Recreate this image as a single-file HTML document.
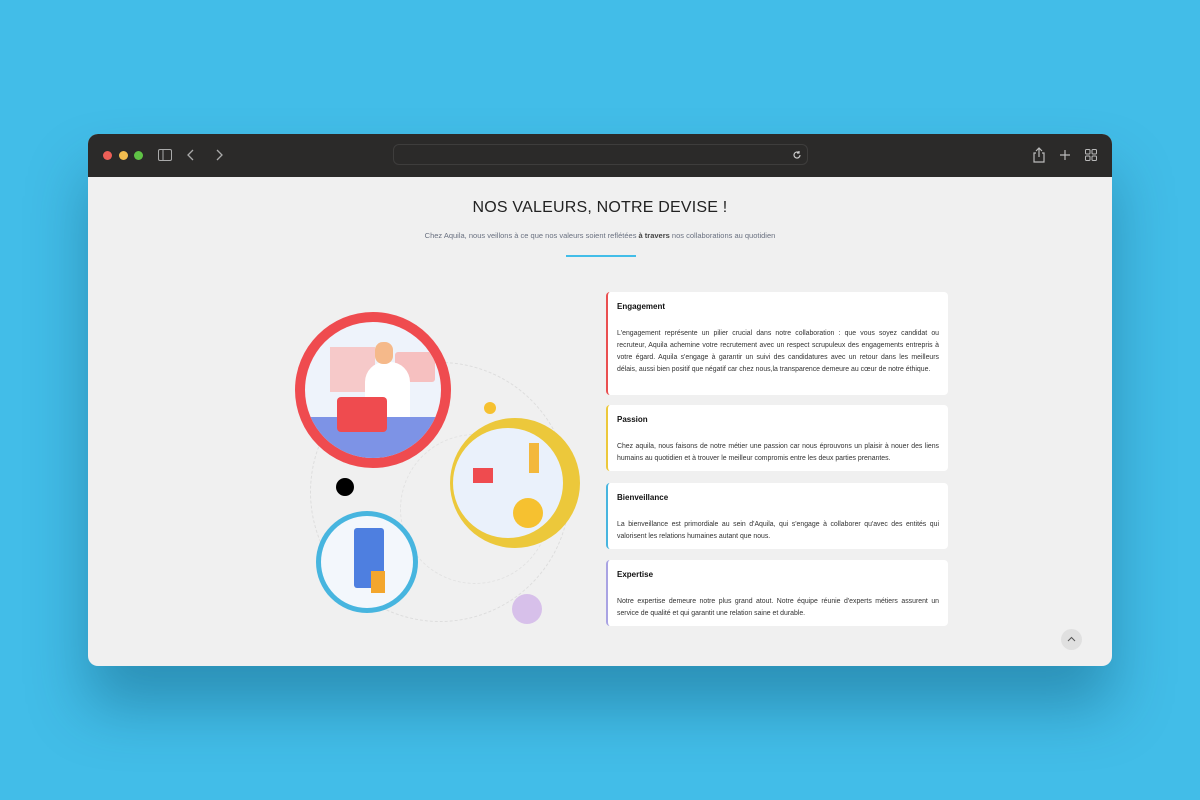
<!DOCTYPE html>
<html><head><meta charset="utf-8"><style>
*{margin:0;padding:0;box-sizing:border-box}
body{width:1200px;height:800px;background:#42bde8;position:relative;overflow:hidden;font-family:"Liberation Sans",sans-serif}
.win{position:absolute;left:88px;top:134px;width:1024px;height:532px;border-radius:10px;overflow:hidden;background:#f0f0f0;box-shadow:0 40px 60px rgba(0,60,90,.35)}
.bar{height:43px;background:#2b2a29;position:relative}
.dot{position:absolute;top:17px;width:9px;height:9px;border-radius:50%}
.url{position:absolute;left:305px;top:10px;width:415px;height:21px;border:1px solid #3e3d3c;border-radius:6px;background:#2b2a29}
h1{position:absolute;top:65px;width:100%;text-align:center;font-size:16px;font-weight:normal;color:#222;letter-spacing:.2px}
.sub{position:absolute;top:97px;width:100%;text-align:center;font-size:7.5px;color:#6a7180}
.line{position:absolute;left:478px;top:121px;width:70px;height:2px;background:#42bde8}
.card{position:absolute;left:518px;width:342px;background:#fff;border-radius:4px;border-left:2px solid;padding:10px 9px 0 9px}
.card b{display:block;font-weight:bold;font-size:8px;color:#111;margin-bottom:17px}
.card p{font-size:6.9px;line-height:12px;color:#333;text-align:justify}
.c{position:absolute;border-radius:50%}
</style></head><body>
<div class="win">
 <div class="bar">
  <div class="dot" style="left:15px;background:#ed5f57"></div>
  <div class="dot" style="left:31px;background:#f3bd4f"></div>
  <div class="dot" style="left:46px;background:#5fc245"></div>
  <svg style="position:absolute;left:70px;top:15px" width="14" height="12"><rect x=".5" y=".5" width="13" height="11" rx="1.5" fill="none" stroke="#aaa"/><line x1="5" y1="1" x2="5" y2="11" stroke="#aaa"/></svg>
  <svg style="position:absolute;left:98px;top:15px" width="10" height="12"><path d="M7 1L2 6l5 5" fill="none" stroke="#aaa" stroke-width="1.3"/></svg>
  <svg style="position:absolute;left:126px;top:15px" width="10" height="12"><path d="M3 1l5 5-5 5" fill="none" stroke="#aaa" stroke-width="1.3"/></svg>
  <div class="url"><svg style="position:absolute;right:5px;top:5px" width="10" height="10"><path d="M8 5a3 3 0 1 1-1-2.2M7 1v2h-2" fill="none" stroke="#ccc" stroke-width="1.2"/></svg></div>
  <svg style="position:absolute;left:944px;top:13px" width="14" height="16"><path d="M4 6H2v9h10V6h-2M7 1v9M4 4l3-3 3 3" fill="none" stroke="#bbb" stroke-width="1.2"/></svg>
  <svg style="position:absolute;left:971px;top:15px" width="12" height="12"><path d="M6 1v10M1 6h10" stroke="#bbb" stroke-width="1.2"/></svg>
  <svg style="position:absolute;left:997px;top:15px" width="12" height="12" fill="none" stroke="#bbb"><rect x=".5" y=".5" width="4.5" height="4.5" rx="1"/><rect x="7" y=".5" width="4.5" height="4.5" rx="1"/><rect x=".5" y="7" width="4.5" height="4.5" rx="1"/><rect x="7" y="7" width="4.5" height="4.5" rx="1"/></svg>
 </div>
 <h1>NOS VALEURS, NOTRE DEVISE !</h1>
 <div class="sub">Chez Aquila, nous veillons à ce que nos valeurs soient reflétées <b style="color:#444">à travers</b> nos collaborations au quotidien</div>
 <div class="line"></div>

 <div class="c" style="left:222px;top:228px;width:260px;height:260px;border:1px dashed #ddd"></div>
 <div class="c" style="left:312px;top:300px;width:150px;height:150px;border:1px dashed #e2e2e2"></div>
 <div class="c" style="left:207px;top:178px;width:156px;height:156px;background:#ef4b4f"></div>
 <div class="c" style="left:217px;top:188px;width:136px;height:136px;background:#eef3fb;overflow:hidden">
  <div style="position:absolute;left:25px;top:25px;width:45px;height:45px;background:#f6c9c9"></div>
  <div style="position:absolute;left:90px;top:30px;width:40px;height:30px;background:#f6c0c0;border-radius:3px"></div>
  <div style="position:absolute;left:0;top:95px;width:136px;height:45px;background:#7d93e6"></div>
  <div style="position:absolute;left:60px;top:40px;width:45px;height:55px;background:#fff;border-radius:20px 20px 0 0"></div>
  <div style="position:absolute;left:70px;top:20px;width:18px;height:22px;background:#f5b98a;border-radius:8px"></div>
  <div style="position:absolute;left:32px;top:75px;width:50px;height:35px;background:#ef4b4f;border-radius:4px"></div>
 </div>
 <div class="c" style="left:362px;top:284px;width:130px;height:130px;background:#ecc83b"></div>
 <div class="c" style="left:365px;top:294px;width:110px;height:110px;background:#eaf1fb;overflow:hidden">
  <div style="position:absolute;left:60px;top:70px;width:30px;height:30px;background:#f6c130;border-radius:50%"></div>
  <div style="position:absolute;left:20px;top:40px;width:20px;height:15px;background:#ef4b4f"></div>
  <div style="position:absolute;left:76px;top:15px;width:10px;height:30px;background:#f3b83c"></div>
 </div>
 <div class="c" style="left:228px;top:377px;width:102px;height:102px;background:#47b5df"></div>
 <div class="c" style="left:233px;top:382px;width:92px;height:92px;background:#f3f7fc;overflow:hidden">
  <div style="position:absolute;left:33px;top:12px;width:30px;height:60px;background:#4e7fe0;border-radius:3px"></div>
  <div style="position:absolute;left:50px;top:55px;width:14px;height:22px;background:#f3a62d"></div>
 </div>
 <div class="c" style="left:248px;top:344px;width:18px;height:18px;background:#000"></div>
 <div class="c" style="left:396px;top:268px;width:12px;height:12px;background:#f6c130"></div>
 <div class="c" style="left:424px;top:460px;width:30px;height:30px;background:#d7c0ea"></div>

 <div class="card" style="top:158px;height:103px;border-color:#ea4f50"><b>Engagement</b><p>L'engagement représente un pilier crucial dans notre collaboration : que vous soyez candidat ou recruteur, Aquila achemine votre recrutement avec un respect scrupuleux des engagements entrepris à votre égard. Aquila s'engage à garantir un suivi des candidatures avec un retour dans les meilleurs délais, aussi bien positif que négatif car chez nous,la transparence demeure au cœur de notre éthique.</p></div>
 <div class="card" style="top:271px;height:66px;border-color:#ecc83b"><b>Passion</b><p>Chez aquila, nous faisons de notre métier une passion car nous éprouvons un plaisir à nouer des liens humains au quotidien et à trouver le meilleur compromis entre les deux parties prenantes.</p></div>
 <div class="card" style="top:349px;height:66px;border-color:#47b5df"><b>Bienveillance</b><p>La bienveillance est primordiale au sein d'Aquila, qui s'engage à collaborer qu'avec des entités qui valorisent les relations humaines autant que nous.</p></div>
 <div class="card" style="top:426px;height:66px;border-color:#a9a3e3"><b>Expertise</b><p>Notre expertise demeure notre plus grand atout. Notre équipe réunie d'experts métiers assurent un service de qualité et qui garantit une relation saine et durable.</p></div>

 <div class="c" style="left:973px;top:495px;width:21px;height:21px;background:#e0e0e0"><svg width="21" height="21"><path d="M7 12l3.5-3.5L14 12" fill="none" stroke="#555" stroke-width="1"/></svg></div>
</div>
</body></html>
